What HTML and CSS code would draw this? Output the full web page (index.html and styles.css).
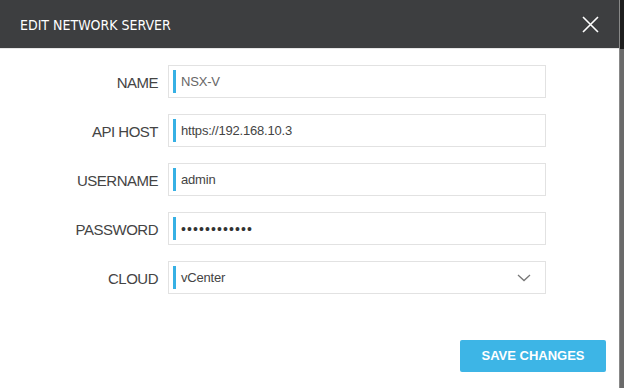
FILE: index.html
```html
<!DOCTYPE html>
<html lang="en">
<head>
  <meta charset="UTF-8">
  <title>Edit Network Server</title>
  <link rel="stylesheet" href="styles.css">
</head>
<body>
  <div class="dialog">
    <div class="header">
      <span class="title">EDIT NETWORK SERVER</span>
      <svg class="close" width="17" height="17" viewBox="0 0 17 17">
        <path d="M1 1 L16 16 M16 1 L1 16" stroke="#fff" stroke-width="1.6" fill="none"/>
      </svg>
    </div>

    <div class="form">
      <label class="label">NAME</label>
      <div class="field"><span class="bar"></span><span class="value light">NSX-V</span></div>

      <label class="label">API HOST</label>
      <div class="field"><span class="bar"></span><span class="value">https://192.168.10.3</span></div>

      <label class="label">USERNAME</label>
      <div class="field"><span class="bar"></span><span class="value">admin</span></div>

      <label class="label">PASSWORD</label>
      <div class="field"><span class="bar"></span><span class="value dots">••••••••••••</span></div>

      <label class="label">CLOUD</label>
      <div class="field"><span class="bar"></span><span class="value">vCenter</span>
        <svg class="chevron" width="14" height="8" viewBox="0 0 14 8">
          <path d="M1 1 L7 6.5 L13 1" stroke="#777" stroke-width="1.3" fill="none"/>
        </svg>
      </div>
    </div>

    <div class="footer">
      <a class="button" href="#">SAVE CHANGES</a>
    </div>
  </div>
  <div class="backdrop"></div>
</body>
</html>
```

FILE: styles.css
```css
body {
  margin: 0;
  padding: 0;
  display: flex;
  height: 388px;
  overflow: hidden;
  font-family: 'Liberation Sans', Arial, sans-serif;
  background: #fff;
}

.dialog {
  width: 619px;
  height: 388px;
  background: #fff;
  display: flex;
  flex-direction: column;
}

.backdrop {
  flex: 1;
  background: linear-gradient(#1d1d1d 0, #1d1d1d 49px, #6a6a6a 49px);
  border-left: 1px solid #888;
}

.header {
  height: 49px;
  background-color: #3d3e40;
  border-bottom: 1px solid #e6e6e6;
  display: flex;
  align-items: center;
  justify-content: space-between;
  padding: 0 20px 0 20px;
  box-sizing: border-box;
}

.title {
  color: #fff;
  font-family: 'Liberation Sans Narrow', 'DejaVu Sans Condensed', sans-serif;
  font-size: 14px;
  padding-top: 2px;
}

.close {
  margin-top: 1px;
}

.form {
  display: grid;
  grid-template-columns: 158px 378px;
  column-gap: 10px;
  row-gap: 16px;
  grid-auto-rows: 33px;
  margin-top: 16px;
}

.label {
  font-size: 15px;
  color: #444;
  text-align: right;
  align-self: center;
  letter-spacing: -0.5px;
  padding-top: 1px;
}

.field {
  border: 1px solid #e2e2e2;
  box-sizing: border-box;
  display: flex;
  align-items: center;
  padding: 0 4px;
}

.bar {
  width: 3px;
  height: 23px;
  background: #36b0e4;
  margin-right: 5px;
}

.value {
  font-size: 13px;
  color: #444;
  letter-spacing: -0.2px;
}

.value.light {
  color: #666;
}

.value.dots {
  font-size: 14px;
  letter-spacing: 1.1px;
  color: #333;
}

.chevron {
  margin-left: auto;
  margin-right: 10px;
}

.footer {
  display: flex;
  justify-content: flex-end;
  margin-top: 46px;
  padding-right: 13px;
}

a.button {
  display: inline-block;
  width: 146px;
  height: 32px;
  line-height: 32px;
  text-align: center;
  background-color: #3db5e6;
  color: #fff;
  font-weight: bold;
  font-size: 13px;
  border-radius: 2px;
  text-decoration: none;
}
```
